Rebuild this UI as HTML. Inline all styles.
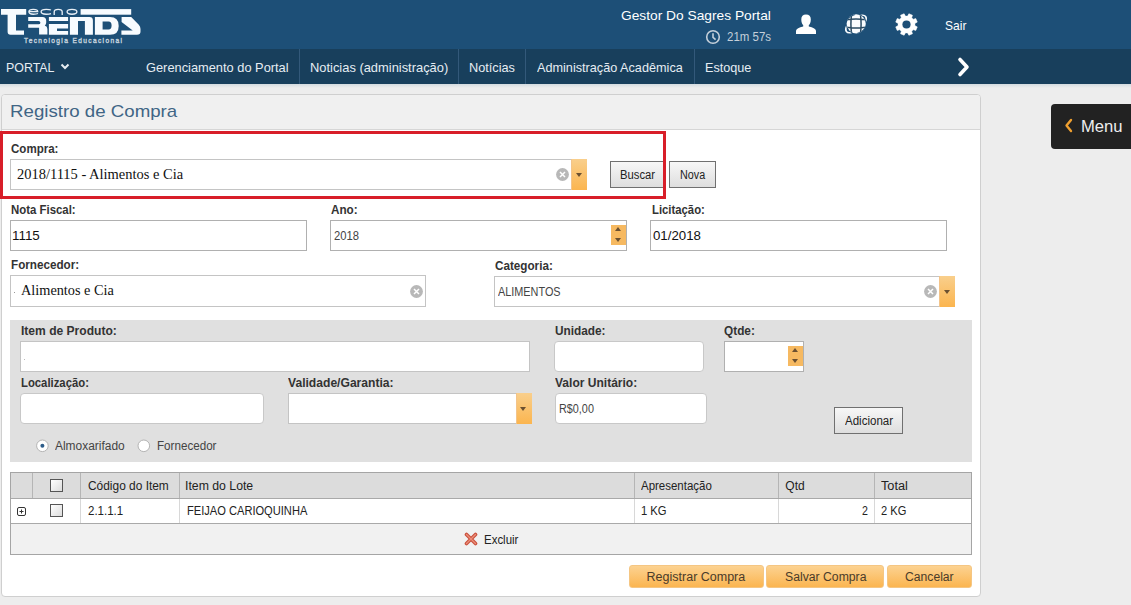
<!DOCTYPE html>
<html><head><meta charset="utf-8">
<style>
html,body{margin:0;padding:0}
body{width:1131px;height:605px;overflow:hidden;position:relative;background:#ededed;font-family:"Liberation Sans",sans-serif}
.a{position:absolute;box-sizing:border-box}
.t{position:absolute;white-space:nowrap;transform-origin:0 0}
.hdr{left:0;top:0;width:1131px;height:49px;background:#1d4f77}
.nav{left:0;top:49px;width:1131px;height:35px;background:#183f5c}
.navsh{left:0;top:84px;width:1131px;height:4px;background:linear-gradient(#d3dbe0,#ededed)}
.sep{top:49px;width:1px;height:35px;background:#33597a}
.panel{left:1px;top:94px;width:980px;height:503px;background:#fff;border:1px solid #cfcfcf;border-radius:4px}
.ptitle{left:2px;top:95px;width:978px;height:35px;background:#f0f0f0;border-bottom:1px solid #d6d6d6;border-radius:3px 3px 0 0}
.red{left:0;top:131px;width:666px;height:68px;border:3px solid #d81e29}
.inp{background:#fff;border:1px solid #b0b0b0}
.inpl{background:#fff;border:1px solid #c4c4c4}
.inpr{background:#fff;border:1px solid #c8c8c8;border-radius:4px}
.dd{background:linear-gradient(#f9cf8c,#fbb54f);border-left:1px solid #f3c48a}
.tri{width:0;height:0;border-left:3.5px solid transparent;border-right:3.5px solid transparent;border-top:4px solid #6b5030}
.triu{width:0;height:0;border-left:3.8px solid transparent;border-right:3.8px solid transparent;border-bottom:4px solid #6b5030}
.spin{background:#f6b961}
.btn{border:1px solid #707070;background:linear-gradient(#f7f7f7,#dedede)}
.gray{left:10px;top:320px;width:962px;height:142px;background:#e0e0e0}
.obtn{border-radius:3px;background:linear-gradient(#fcd291,#fbb550);border:1px solid #f5c683}
</style></head><body>
<div class="a hdr"></div>
<div class="a nav"></div>
<div class="a navsh"></div>

<!-- logo -->
<svg class="a" style="left:0;top:0" width="150" height="48" viewBox="0 0 150 48">
 <g fill="#f7fbff">
  <path d="M1,9.1 H26.2 V14.8 H16 V30.6 H24 V34.7 H10.5 Q7.6,34.7 7.6,31.8 V14.8 H1 Z"/>
  <path d="M28.2,17 H42.5 Q46.2,17 46.2,20.8 V22.8 Q46.2,24.6 44.8,25.6 Q47.4,26.6 47.4,29 V34.6 H39.1 V27.7 H28.2 V24.3 H38.6 Q40.4,24.3 40.4,22.7 Q40.4,21.1 38.6,21.1 H28.2 Z"/>
  <path d="M48.9,17.1 H68.1 V21.1 H48.9 Z M48.9,24 H68.1 V28.4 H57 V31 H68.1 V34.8 H48.9 Z"/>
  <path d="M69.9,17.1 H89.5 Q92.9,17.1 92.9,20.5 V34.8 H84.9 V21.1 H78 V34.8 H69.9 Z"/>
  <path fill-rule="evenodd" d="M94.9,17.1 H110 Q118.7,17.1 118.7,25.9 Q118.7,34.8 110,34.8 H94.9 Z M102.6,21.6 V29.5 H108.5 Q111.6,29.5 111.6,25.5 Q111.6,21.6 108.5,21.6 Z"/>
  <path d="M121.6,17.1 H131.2 L138.8,24.8 Q140.5,26.5 140.5,29 V31.5 Q140.5,34.8 137,34.8 H121.4 V30.6 H132.7 L121.6,22 Z"/>
  <rect x="80.6" y="9.1" width="50.6" height="5.6"/>
 </g>
 <g fill="none" stroke="#e8eff6" stroke-width="1.35">
  <path d="M38,13.5 Q36.6,14.2 33.3,14.2 Q28.9,14.2 28.9,11.8 Q28.9,9.4 33.3,9.4 Q37.7,9.4 37.7,11.6 H29.2"/>
  <path d="M51,10 Q49.6,9.4 46.2,9.4 Q41.1,9.4 41.1,11.8 Q41.1,14.2 46.2,14.2 Q49.6,14.2 51,13.6"/>
  <path d="M54.2,14.9 V11.9 Q54.2,9.4 58.2,9.4 Q62.2,9.4 62.2,11.9 V14.9"/>
  <ellipse cx="72" cy="11.8" rx="4.9" ry="2.4"/>
 </g>
 <text x="24" y="43.4" font-family="Liberation Sans" font-weight="normal" font-size="6.6" fill="#c4d2de" stroke="#c4d2de" stroke-width="0.35" textLength="98" lengthAdjust="spacing">Tecnologia Educacional</text>
</svg>

<!-- clock -->
<svg class="a" style="left:705px;top:29px" width="16" height="16" viewBox="0 0 16 16">
 <circle cx="8" cy="8" r="6.3" fill="none" stroke="#c5d0da" stroke-width="1.6"/>
 <path d="M8,4.2 V8.3 L10.6,10.6" fill="none" stroke="#c5d0da" stroke-width="1.6"/>
</svg>
<!-- user -->
<svg class="a" style="left:795px;top:14px" width="22" height="21" viewBox="0 0 22 21">
 <path d="M6.3,5.2 Q6.3,0.4 11,0.4 Q15.8,0.4 15.8,5.2 Q15.8,9.5 13.8,11 V12.6 Q20.2,13.8 21,16.8 V19.9 H1 V16.8 Q1.8,13.8 8.2,12.6 V11 Q6.3,9.5 6.3,5.2 Z" fill="#fff"/>
</svg>
<!-- globe -->
<svg class="a" style="left:842px;top:10px" width="28" height="28" viewBox="0 0 28 28">
 <defs><clipPath id="gc"><circle cx="14.2" cy="13.8" r="9.6"/></clipPath></defs>
 <ellipse cx="14" cy="14" rx="12.2" ry="5.6" transform="rotate(-38 14 14)" fill="none" stroke="#fafcfe" stroke-width="1.6"/>
 <circle cx="14.2" cy="13.8" r="10.4" fill="#1d4f77"/>
 <circle cx="14.2" cy="13.8" r="9.6" fill="#fafcfe"/>
 <g clip-path="url(#gc)" fill="none" stroke="#2a4a62" stroke-width="1.5">
  <path d="M3,9.8 Q14,8 25,9.8 M3,17.2 Q14,19 25,17.2 M9.8,3 Q8,14 9.8,25 M18.2,3 Q20,14 18.2,25"/>
  <path d="M4,12 Q7,6 13,4.5" stroke="#1d4f77" stroke-width="1.2"/>
  <path d="M15,23.5 Q21,22 24,16" stroke="#1d4f77" stroke-width="1"/>
 </g>
</svg>
<!-- gear -->
<svg class="a" style="left:895px;top:13px" width="23" height="23" viewBox="-11.5 -11.5 23 23">
 <path fill="#fff" stroke="#fff" stroke-width="0.6" stroke-linejoin="round" d="M8.24,1.01 L10.74,2.38 L9.28,5.91 L6.54,5.11 L5.11,6.54 L5.91,9.28 L2.38,10.74 L1.01,8.24 L-1.01,8.24 L-2.38,10.74 L-5.91,9.28 L-5.11,6.54 L-6.54,5.11 L-9.28,5.91 L-10.74,2.38 L-8.24,1.01 L-8.24,-1.01 L-10.74,-2.38 L-9.28,-5.91 L-6.54,-5.11 L-5.11,-6.54 L-5.91,-9.28 L-2.38,-10.74 L-1.01,-8.24 L1.01,-8.24 L2.38,-10.74 L5.91,-9.28 L5.11,-6.54 L6.54,-5.11 L9.28,-5.91 L10.74,-2.38 L8.24,-1.01Z"/>
 <circle cx="0" cy="0" r="8.4" fill="#fff"/>
 <circle cx="0" cy="0" r="4.1" fill="#1d4f77"/>
</svg>

<!-- nav separators -->
<div class="a sep" style="left:299px"></div>
<div class="a sep" style="left:458px"></div>
<div class="a sep" style="left:525px"></div>
<div class="a sep" style="left:694px"></div>
<!-- nav chevrons -->
<svg class="a" style="left:59px;top:61px" width="12" height="10" viewBox="0 0 12 10">
 <path d="M2.5,3.5 L6,7 L9.5,3.5" fill="none" stroke="#e6edf3" stroke-width="2"/>
</svg>
<svg class="a" style="left:955px;top:55px" width="18" height="24" viewBox="0 0 18 24">
 <path d="M5,4.5 L12,12 L5,19.5" fill="none" stroke="#fff" stroke-width="3.6" stroke-linecap="round" stroke-linejoin="round"/>
</svg>

<!-- panel -->
<div class="a panel"></div>
<div class="a ptitle"></div>

<!-- compra row -->
<div class="a inpl" style="left:10px;top:159px;width:577px;height:31px"></div>
<div class="a dd" style="left:571px;top:159px;width:16px;height:31px"></div>
<div class="a tri" style="left:575.5px;top:173px"></div>
<div class="a btn" style="left:610px;top:161px;width:54px;height:27px"></div>
<div class="a btn" style="left:669px;top:161px;width:47px;height:27px"></div>

<!-- row 2 -->
<div class="a inp" style="left:10px;top:220px;width:297px;height:31px"></div>
<div class="a inp" style="left:330px;top:220px;width:297px;height:31px"></div>
<div class="a spin" style="left:611px;top:225px;width:15px;height:9.5px"></div>
<div class="a spin" style="left:611px;top:235px;width:15px;height:10px"></div>
<div class="a triu" style="left:614.7px;top:226.5px"></div>
<div class="a tri" style="left:614.7px;top:238px;border-left-width:3.8px;border-right-width:3.8px"></div>
<div class="a inp" style="left:650px;top:220px;width:297px;height:31px"></div>

<!-- row 3 -->
<div class="a inpl" style="left:10px;top:275px;width:416px;height:32px"></div>
<div class="a inpl" style="left:494px;top:276px;width:461px;height:31px"></div>
<div class="a dd" style="left:939px;top:276px;width:16px;height:31px"></div>
<div class="a tri" style="left:943.5px;top:290px"></div>

<!-- gray item panel -->
<div class="a gray"></div>
<div class="a inpl" style="left:20px;top:341px;width:510px;height:31px"></div>
<div class="a inpr" style="left:554px;top:341px;width:150px;height:31px"></div>
<div class="a inp" style="left:724px;top:341px;width:80px;height:31px"></div>
<div class="a spin" style="left:788px;top:346px;width:15px;height:9.5px"></div>
<div class="a spin" style="left:788px;top:356px;width:15px;height:10px"></div>
<div class="a triu" style="left:791.7px;top:347.5px"></div>
<div class="a tri" style="left:791.7px;top:359px;border-left-width:3.8px;border-right-width:3.8px"></div>
<div class="a inpr" style="left:20px;top:393px;width:244px;height:31px"></div>
<div class="a inpl" style="left:288px;top:393px;width:244px;height:31px"></div>
<div class="a dd" style="left:516px;top:393px;width:16px;height:31px"></div>
<div class="a tri" style="left:520px;top:407px"></div>
<div class="a inpr" style="left:555px;top:393px;width:152px;height:31px"></div>
<div class="a btn" style="left:834px;top:407px;width:69px;height:27px"></div>
<!-- radios -->
<svg class="a" style="left:35px;top:439px" width="16" height="14" viewBox="0 0 16 14">
 <circle cx="7.4" cy="6.8" r="5.8" fill="#fff" stroke="#b4b4b4" stroke-width="1"/>
 <circle cx="7.4" cy="6.8" r="2" fill="#2d5d8a"/>
</svg>
<svg class="a" style="left:136px;top:439px" width="16" height="14" viewBox="0 0 16 14">
 <circle cx="7.8" cy="6.8" r="5.8" fill="#fff" stroke="#b4b4b4" stroke-width="1"/>
</svg>

<!-- table -->
<div class="a" style="left:10px;top:472px;width:962px;height:83px;border:1px solid #a5a5a5;background:#f1f1f1"></div>
<div class="a" style="left:11px;top:473px;width:960px;height:26px;background:#dcdcdc;border-bottom:1px solid #a9a9a9"></div>
<div class="a" style="left:11px;top:499px;width:960px;height:25px;background:#fff;border-bottom:1px solid #a9a9a9"></div>
<div class="a" style="left:32px;top:473px;width:1px;height:25px;background:#b5b5b5"></div>
<div class="a" style="left:80px;top:473px;width:1px;height:25px;background:#b5b5b5"></div>
<div class="a" style="left:179px;top:473px;width:1px;height:25px;background:#b5b5b5"></div>
<div class="a" style="left:634px;top:473px;width:1px;height:25px;background:#b5b5b5"></div>
<div class="a" style="left:778px;top:473px;width:1px;height:25px;background:#b5b5b5"></div>
<div class="a" style="left:874px;top:473px;width:1px;height:25px;background:#b5b5b5"></div>
<div class="a" style="left:80px;top:499px;width:1px;height:24px;background:#d8d8d8"></div>
<div class="a" style="left:179px;top:499px;width:1px;height:24px;background:#d8d8d8"></div>
<div class="a" style="left:634px;top:499px;width:1px;height:24px;background:#d8d8d8"></div>
<div class="a" style="left:778px;top:499px;width:1px;height:24px;background:#d8d8d8"></div>
<div class="a" style="left:874px;top:499px;width:1px;height:24px;background:#d8d8d8"></div>
<div class="a" style="left:50px;top:479px;width:13px;height:13px;border:1px solid #555;background:linear-gradient(135deg,#fff,#dcdcdc)"></div>
<div class="a" style="left:50px;top:504px;width:13px;height:13px;border:1px solid #555;background:linear-gradient(135deg,#fff,#dcdcdc)"></div>
<svg class="a" style="left:16px;top:506px" width="11" height="11" viewBox="0 0 11 11">
 <rect x="1.5" y="1.5" width="8" height="8" rx="1.5" fill="#fff" stroke="#333" stroke-width="1"/>
 <path d="M3.5,5.5 H7.5 M5.5,3.5 V7.5" stroke="#333" stroke-width="1"/>
</svg>
<svg class="a" style="left:464px;top:532px" width="14" height="14" viewBox="0 0 14 14">
 <path d="M2.5,2.5 L11.5,11.5 M11.5,2.5 L2.5,11.5" stroke="#c94f3c" stroke-width="3.6" stroke-linecap="round"/>
 <path d="M2.5,2.5 L11.5,11.5 M11.5,2.5 L2.5,11.5" stroke="#ec8f7a" stroke-width="1.4" stroke-linecap="round"/>
</svg>

<!-- bottom buttons -->
<div class="a obtn" style="left:629px;top:565px;width:135px;height:23px"></div>
<div class="a obtn" style="left:766px;top:565px;width:118px;height:23px"></div>
<div class="a obtn" style="left:887px;top:565px;width:85px;height:23px"></div>

<!-- clear icons -->
<svg class="a" style="left:555px;top:167px" width="15" height="15" viewBox="0 0 15 15">
 <circle cx="7.5" cy="7.5" r="6.4" fill="#b8b8b8"/>
 <path d="M5,5 L10,10 M10,5 L5,10" stroke="#fff" stroke-width="1.5"/>
</svg>
<svg class="a" style="left:408.5px;top:283.5px" width="15" height="15" viewBox="0 0 15 15">
 <circle cx="7.5" cy="7.5" r="6.4" fill="#b8b8b8"/>
 <path d="M5,5 L10,10 M10,5 L5,10" stroke="#fff" stroke-width="1.5"/>
</svg>
<svg class="a" style="left:923px;top:284px" width="15" height="15" viewBox="0 0 15 15">
 <circle cx="7.5" cy="7.5" r="6.4" fill="#b8b8b8"/>
 <path d="M5,5 L10,10 M10,5 L5,10" stroke="#fff" stroke-width="1.5"/>
</svg>

<div class="a" style="left:14px;top:292px;width:1px;height:1px;background:#999"></div>
<div class="a" style="left:24px;top:359px;width:1px;height:1px;background:#bbb"></div>
<!-- red annotation -->
<div class="a red"></div>

<!-- menu tab -->
<div class="a" style="left:1051px;top:104px;width:90px;height:45px;background:#222;border-radius:4px"></div>
<svg class="a" style="left:1062px;top:117px" width="13" height="17" viewBox="0 0 13 17">
 <path d="M9,3 L4.5,8.5 L9,14" fill="none" stroke="#f0a030" stroke-width="2.4" stroke-linecap="round" stroke-linejoin="round"/>
</svg>

<div class="t" style="left:621.00px;top:8.80px;font-family:'Liberation Sans', sans-serif;font-size:13px;font-weight:400;line-height:13px;color:#ffffff;transform:scaleX(1.0584);">Gestor Do Sagres Portal</div>
<div class="t" style="left:727.00px;top:31.00px;font-family:'Liberation Sans', sans-serif;font-size:12px;font-weight:400;line-height:12px;color:#c5d0da;transform:scaleX(0.9560);">21m 57s</div>
<div class="t" style="left:945.00px;top:18.80px;font-family:'Liberation Sans', sans-serif;font-size:13px;font-weight:400;line-height:13px;color:#ffffff;transform:scaleX(0.9248);">Sair</div>
<div class="t" style="left:5.75px;top:60.80px;font-family:'Liberation Sans', sans-serif;font-size:13px;font-weight:400;line-height:13px;color:#e6edf3;transform:scaleX(0.9540);">PORTAL</div>
<div class="t" style="left:146.30px;top:60.90px;font-family:'Liberation Sans', sans-serif;font-size:13px;font-weight:400;line-height:13px;color:#e6edf3;transform:scaleX(0.9866);">Gerenciamento do Portal</div>
<div class="t" style="left:309.71px;top:60.90px;font-family:'Liberation Sans', sans-serif;font-size:13px;font-weight:400;line-height:13px;color:#e6edf3;transform:scaleX(0.9913);">Noticias (administração)</div>
<div class="t" style="left:468.52px;top:60.90px;font-family:'Liberation Sans', sans-serif;font-size:13px;font-weight:400;line-height:13px;color:#e6edf3;transform:scaleX(0.9793);">Notícias</div>
<div class="t" style="left:536.80px;top:60.90px;font-family:'Liberation Sans', sans-serif;font-size:13px;font-weight:400;line-height:13px;color:#e6edf3;transform:scaleX(0.9745);">Administração Acadêmica</div>
<div class="t" style="left:704.83px;top:60.90px;font-family:'Liberation Sans', sans-serif;font-size:13px;font-weight:400;line-height:13px;color:#e6edf3;transform:scaleX(0.9726);">Estoque</div>
<div class="t" style="left:9.90px;top:103.20px;font-family:'Liberation Sans', sans-serif;font-size:17px;font-weight:400;line-height:17px;color:#406585;transform:scaleX(1.0991);">Registro de Compra</div>
<div class="t" style="left:11.00px;top:143.00px;font-family:'Liberation Sans', sans-serif;font-size:12px;font-weight:700;line-height:12px;color:#333333;transform:scaleX(0.9619);">Compra:</div>
<div class="t" style="left:17.00px;top:165.90px;font-family:'Liberation Serif', serif;font-size:15.5px;font-weight:400;line-height:15.5px;color:#111;transform:scaleX(0.9334);">2018/1115 - Alimentos e Cia</div>
<div class="t" style="left:620.40px;top:168.80px;font-family:'Liberation Sans', sans-serif;font-size:12px;font-weight:400;line-height:12px;color:#222;transform:scaleX(0.9370);">Buscar</div>
<div class="t" style="left:679.60px;top:168.80px;font-family:'Liberation Sans', sans-serif;font-size:12px;font-weight:400;line-height:12px;color:#222;transform:scaleX(0.8963);">Nova</div>
<div class="t" style="left:11.30px;top:204.40px;font-family:'Liberation Sans', sans-serif;font-size:12px;font-weight:700;line-height:12px;color:#333333;transform:scaleX(0.9505);">Nota Fiscal:</div>
<div class="t" style="left:11.71px;top:228.90px;font-family:'Liberation Sans', sans-serif;font-size:13.5px;font-weight:400;line-height:13.5px;color:#111;transform:scaleX(0.9917);">1115</div>
<div class="t" style="left:331.00px;top:204.40px;font-family:'Liberation Sans', sans-serif;font-size:12px;font-weight:700;line-height:12px;color:#333333;transform:scaleX(0.9762);">Ano:</div>
<div class="t" style="left:334.40px;top:230.00px;font-family:'Liberation Sans', sans-serif;font-size:12px;font-weight:400;line-height:12px;color:#444;transform:scaleX(0.9363);">2018</div>
<div class="t" style="left:651.50px;top:204.40px;font-family:'Liberation Sans', sans-serif;font-size:12px;font-weight:700;line-height:12px;color:#333333;transform:scaleX(0.9433);">Licitação:</div>
<div class="t" style="left:653.00px;top:229.00px;font-family:'Liberation Sans', sans-serif;font-size:13.5px;font-weight:400;line-height:13.5px;color:#111;transform:scaleX(0.9815);">01/2018</div>
<div class="t" style="left:10.60px;top:258.70px;font-family:'Liberation Sans', sans-serif;font-size:12px;font-weight:700;line-height:12px;color:#333333;transform:scaleX(0.9737);">Fornecedor:</div>
<div class="t" style="left:21.00px;top:281.60px;font-family:'Liberation Serif', serif;font-size:15.5px;font-weight:400;line-height:15.5px;color:#111;transform:scaleX(0.9221);">Alimentos e Cia</div>
<div class="t" style="left:494.60px;top:259.60px;font-family:'Liberation Sans', sans-serif;font-size:12px;font-weight:700;line-height:12px;color:#333333;transform:scaleX(0.9735);">Categoria:</div>
<div class="t" style="left:498.40px;top:285.70px;font-family:'Liberation Sans', sans-serif;font-size:12px;font-weight:400;line-height:12px;color:#444;transform:scaleX(0.9056);">ALIMENTOS</div>
<div class="t" style="left:20.50px;top:324.50px;font-family:'Liberation Sans', sans-serif;font-size:12px;font-weight:700;line-height:12px;color:#333333;transform:scaleX(1.0049);">Item de Produto:</div>
<div class="t" style="left:554.50px;top:324.80px;font-family:'Liberation Sans', sans-serif;font-size:12px;font-weight:700;line-height:12px;color:#333333;transform:scaleX(0.9834);">Unidade:</div>
<div class="t" style="left:724.40px;top:324.80px;font-family:'Liberation Sans', sans-serif;font-size:12px;font-weight:700;line-height:12px;color:#333333;transform:scaleX(0.9857);">Qtde:</div>
<div class="t" style="left:20.50px;top:377.00px;font-family:'Liberation Sans', sans-serif;font-size:12px;font-weight:700;line-height:12px;color:#333333;transform:scaleX(0.9433);">Localização:</div>
<div class="t" style="left:288.00px;top:376.70px;font-family:'Liberation Sans', sans-serif;font-size:12px;font-weight:700;line-height:12px;color:#333333;transform:scaleX(1.0086);">Validade/Garantia:</div>
<div class="t" style="left:555.40px;top:376.70px;font-family:'Liberation Sans', sans-serif;font-size:12px;font-weight:700;line-height:12px;color:#333333;transform:scaleX(1.0023);">Valor Unitário:</div>
<div class="t" style="left:559.40px;top:402.70px;font-family:'Liberation Sans', sans-serif;font-size:12px;font-weight:400;line-height:12px;color:#444;transform:scaleX(0.9021);">R$0,00</div>
<div class="t" style="left:844.80px;top:414.80px;font-family:'Liberation Sans', sans-serif;font-size:12px;font-weight:400;line-height:12px;color:#222;transform:scaleX(0.9614);">Adicionar</div>
<div class="t" style="left:55.00px;top:440.30px;font-family:'Liberation Sans', sans-serif;font-size:12px;font-weight:400;line-height:12px;color:#444;transform:scaleX(0.9949);">Almoxarifado</div>
<div class="t" style="left:156.50px;top:440.30px;font-family:'Liberation Sans', sans-serif;font-size:12px;font-weight:400;line-height:12px;color:#444;transform:scaleX(0.9695);">Fornecedor</div>
<div class="t" style="left:87.50px;top:480.10px;font-family:'Liberation Sans', sans-serif;font-size:12px;font-weight:400;line-height:12px;color:#222;transform:scaleX(0.9928);">Código do Item</div>
<div class="t" style="left:185.48px;top:480.10px;font-family:'Liberation Sans', sans-serif;font-size:12px;font-weight:400;line-height:12px;color:#222;transform:scaleX(1.0222);">Item do Lote</div>
<div class="t" style="left:641.20px;top:480.10px;font-family:'Liberation Sans', sans-serif;font-size:12px;font-weight:400;line-height:12px;color:#222;transform:scaleX(0.9559);">Apresentação</div>
<div class="t" style="left:785.30px;top:480.10px;font-family:'Liberation Sans', sans-serif;font-size:12px;font-weight:400;line-height:12px;color:#222;">Qtd</div>
<div class="t" style="left:881.30px;top:480.10px;font-family:'Liberation Sans', sans-serif;font-size:12px;font-weight:400;line-height:12px;color:#222;transform:scaleX(1.0615);">Total</div>
<div class="t" style="left:87.50px;top:505.40px;font-family:'Liberation Sans', sans-serif;font-size:12px;font-weight:400;line-height:12px;color:#222;transform:scaleX(0.9589);">2.1.1.1</div>
<div class="t" style="left:186.50px;top:505.40px;font-family:'Liberation Sans', sans-serif;font-size:12px;font-weight:400;line-height:12px;color:#222;transform:scaleX(0.9253);">FEIJAO CARIOQUINHA</div>
<div class="t" style="left:641.00px;top:505.40px;font-family:'Liberation Sans', sans-serif;font-size:12px;font-weight:400;line-height:12px;color:#222;transform:scaleX(0.9366);">1 KG</div>
<div class="t" style="left:861.50px;top:505.40px;font-family:'Liberation Sans', sans-serif;font-size:12px;font-weight:400;line-height:12px;color:#222;transform:scaleX(0.8857);">2</div>
<div class="t" style="left:881.00px;top:505.40px;font-family:'Liberation Sans', sans-serif;font-size:12px;font-weight:400;line-height:12px;color:#222;transform:scaleX(0.9255);">2 KG</div>
<div class="t" style="left:483.60px;top:533.70px;font-family:'Liberation Sans', sans-serif;font-size:12px;font-weight:400;line-height:12px;color:#222;transform:scaleX(0.9553);">Excluir</div>
<div class="t" style="left:646.60px;top:570.80px;font-family:'Liberation Sans', sans-serif;font-size:12.5px;font-weight:400;line-height:12.5px;color:#4a3b2a;">Registrar Compra</div>
<div class="t" style="left:784.50px;top:570.80px;font-family:'Liberation Sans', sans-serif;font-size:12.5px;font-weight:400;line-height:12.5px;color:#4a3b2a;transform:scaleX(0.9771);">Salvar Compra</div>
<div class="t" style="left:905.20px;top:570.80px;font-family:'Liberation Sans', sans-serif;font-size:12.5px;font-weight:400;line-height:12.5px;color:#4a3b2a;transform:scaleX(0.9727);">Cancelar</div>
<div class="t" style="left:1080.66px;top:119.00px;font-family:'Liberation Sans', sans-serif;font-size:16px;font-weight:400;line-height:16px;color:#eeeeee;transform:scaleX(1.0387);">Menu</div>
</body></html>
